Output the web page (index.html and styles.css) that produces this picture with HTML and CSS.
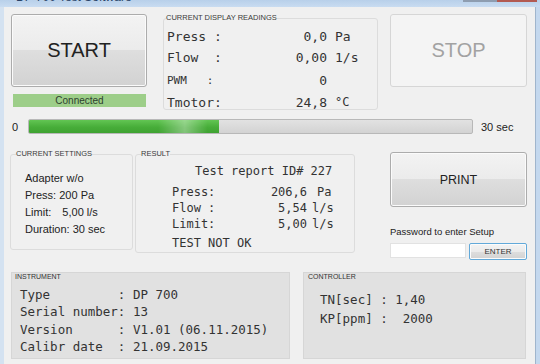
FILE: index.html
```html
<!DOCTYPE html>
<html lang="en">
<head>
    <meta charset="UTF-8">
    <meta name="viewport" content="width=device-width, initial-scale=1.0">
    <title>DP 700 Test Software</title>
    <link rel="stylesheet" href="styles.css">
</head>
<body>
    <div class="window">
        <div class="titlebar">
            <span class="title">DP 700 Test Software</span>
            <span class="caption-buttons">
                <span class="cap-min"></span>
                <span class="cap-close"></span>
            </span>
        </div>
        <div class="frame">
            <div class="frame-left"></div>
            <div class="client">
                <div class="top-row">
                    <div class="start-col">
                        <button class="btn btn-start">START</button>
                        <div class="status">Connected</div>
                    </div>
                    <fieldset class="group readings">
                        <legend>CURRENT DISPLAY READINGS</legend>
                        <div class="readings-grid">
                            <span class="lbl">Press :</span><span class="val">0,0</span><span>Pa</span>
                            <span class="lbl">Flow  :</span><span class="val">0,00</span><span>1/s</span>
                            <span class="lbl pwm">PWM   :</span><span class="val">0</span><span></span>
                            <span class="lbl">Tmotor:</span><span class="val">24,8</span><span class="deg">°C</span>
                        </div>
                    </fieldset>
                    <button class="btn btn-stop" disabled>STOP</button>
                </div>

                <div class="progress-row">
                    <span class="bar-min">0</span>
                    <div class="bar">
                        <div class="bar-fill" style="width: 43%;"></div>
                    </div>
                    <span class="bar-max">30 sec</span>
                </div>

                <div class="mid-row">
                    <fieldset class="group settings">
                        <legend>CURRENT SETTINGS</legend>
                        <div class="settings-list">
                            <div>Adapter w/o</div>
                            <div>Press: 200 Pa</div>
                            <div>Limit: <span class="limit-val">5,00 l/s</span></div>
                            <div>Duration: 30 sec</div>
                        </div>
                    </fieldset>
                    <fieldset class="group result">
                        <legend>RESULT</legend>
                        <div class="result-body">
                            <div class="result-title">Test report ID# 227</div>
                            <div class="result-grid">
                                <span class="lbl">Press:</span><span class="val">206,6</span><span class="unit-pa">Pa</span>
                                <span class="lbl">Flow :</span><span class="val">5,54</span><span>l/s</span>
                                <span class="lbl">Limit:</span><span class="val">5,00</span><span>l/s</span>
                            </div>
                            <div class="result-verdict">TEST NOT OK</div>
                        </div>
                    </fieldset>
                    <div class="setup-col">
                        <button class="btn btn-print">PRINT</button>
                        <div class="setup-label">Password to enter Setup</div>
                        <div class="setup-form">
                            <input type="password" class="setup-input">
                            <button class="btn btn-enter">ENTER</button>
                        </div>
                    </div>
                </div>

                <div class="bottom-row">
                    <div class="panel instrument">
                        <div class="panel-title">INSTRUMENT</div>
                        <div class="panel-lines">Type         : DP 700
Serial number: 13
Version      : V1.01 (06.11.2015)
Calibr date  : 21.09.2015</div>
                    </div>
                    <div class="panel controller">
                        <div class="panel-title">CONTROLLER</div>
                        <div class="panel-lines">TN[sec] : 1,40
KP[ppm] :  2000</div>
                    </div>
                </div>
            </div>
            <div class="frame-right"></div>
        </div>
    </div>
</body>
</html>
```

FILE: styles.css
```css
* {
    box-sizing: border-box;
}

body {
    margin: 0;
    width: 540px;
    height: 364px;
    overflow: hidden;
    background: #c4d8ee;
    font-family: "Liberation Sans", Arial, sans-serif;
    color: #222;
}

.window {
    display: flex;
    flex-direction: column;
    height: 364px;
}

/* window chrome */
.titlebar {
    height: 7px;
    flex: none;
    display: flex;
    overflow: hidden;
    background: linear-gradient(#b8d0ea, #c9dcf1);
}

.title {
    font-size: 12px;
    line-height: 12px;
    margin: -9px 0 0 16px;
    color: #2a4468;
}

.caption-buttons {
    display: flex;
    height: 2px;
    margin-left: auto;
    margin-right: 3px;
}

.cap-min { width: 34px; background: #8e9db0; }
.cap-close { width: 40px; background: #b25a52; }

.frame {
    flex: 1;
    display: flex;
}

.frame-left {
    width: 4px;
    background: #d4e2f1;
}

.frame-right {
    width: 5px;
    background: #c4d8ee;
    border-left: 1px solid #a0b5cc;
}

.client {
    flex: 1;
    background: #f0f0f0;
    padding: 5px 0 0 6px;
}

/* buttons */
.btn {
    display: block;
    padding: 0;
    font-family: "Liberation Sans", Arial, sans-serif;
    color: #222;
    border: 1px solid #acacac;
    border-radius: 3px;
    background: linear-gradient(#f3f3f3 0%, #ebebeb 50%, #dedede 50%, #d2d2d2 100%);
    box-shadow: inset 0 0 0 1px #fbfbfb;
}

.btn-start {
    width: 136px;
    height: 73px;
    font-size: 20px;
}

.btn-stop {
    width: 137px;
    height: 73px;
    margin: 2px 0 0 12px;
    font-size: 20px;
    color: #a2a2a2;
    background: #f4f4f4;
    border-color: #d6d6d6;
    box-shadow: none;
}

.btn-print {
    width: 137px;
    height: 55px;
    margin-top: 2px;
    font-size: 12.5px;
}

.btn-enter {
    width: 58px;
    height: 17px;
    margin-left: 3px;
    font-size: 8px;
    color: #333;
    border-color: #62a9d9;
    border-radius: 2px;
}

/* group boxes */
.group {
    margin: 0;
    padding: 0;
    min-width: 0;
    border: 1px solid #dcdcdc;
    border-radius: 3px;
}

.group legend {
    padding: 0;
    font-size: 7.5px;
    line-height: 8px;
    color: #3a3a3a;
}

.lbl {
    white-space: pre;
}

/* top row */
.top-row {
    display: flex;
    align-items: flex-start;
    height: 98px;
}

.start-col {
    width: 136px;
    margin: 2px 0 0 1px;
}

.status {
    height: 13px;
    margin: 7px 1px 0 2px;
    background: #9dce89;
    font-size: 10px;
    line-height: 13px;
    text-align: center;
    color: #2f3f2f;
}

.readings {
    width: 215px;
    height: 96px;
    margin: 2px 0 0 16px;
}

.readings legend {
    margin-left: 2px;
}

.readings-grid {
    display: grid;
    grid-template-columns: 80px 72px auto;
    grid-template-rows: 21px 21px 24px 20px;
    column-gap: 8px;
    align-items: center;
    margin: 4px 0 0 3px;
    font-family: "DejaVu Sans Mono", monospace;
    font-size: 13px;
    color: #333;
}

.val {
    text-align: right;
}

.pwm {
    font-size: 11px;
}

.deg {
    font-size: 12px;
}

/* progress */
.progress-row {
    display: flex;
    align-items: center;
    height: 15px;
    margin-top: 9px;
    font-size: 11px;
}

.bar-min {
    width: 18px;
    padding-left: 2px;
}

.bar {
    width: 445px;
    height: 15px;
    border: 1px solid #b8b8b8;
    border-radius: 2px;
    background: linear-gradient(#e2e2e2, #d3d3d3);
    overflow: hidden;
}

.bar-fill {
    height: 100%;
    background:
        linear-gradient(90deg, transparent 68%, rgba(255, 255, 255, 0.35) 82%, transparent 94%),
        linear-gradient(#62c553, #47ad39 55%, #3fa332);
}

.bar-max {
    margin-left: 8px;
}

/* middle row */
.mid-row {
    display: flex;
    align-items: flex-start;
    height: 122px;
    margin-top: 16px;
}

.settings {
    width: 123px;
    height: 100px;
}

.settings legend,
.result legend {
    margin-left: 5px;
}

.settings-list {
    margin: 12px 0 0 14px;
    font-size: 11px;
    line-height: 17px;
}

.limit-val {
    margin-left: 8px;
}

.result {
    width: 220px;
    height: 103px;
    margin-left: 2px;
}

.result-body {
    font-family: "DejaVu Sans Mono", monospace;
    font-size: 12px;
    color: #333;
}

.result-title {
    margin: 5px 0 0 59px;
    line-height: 16px;
}

.result-grid {
    display: grid;
    grid-template-columns: 72px 58px auto;
    grid-template-rows: 17px 16px 16px;
    column-gap: 5px;
    align-items: center;
    margin: 4px 0 0 36px;
}

.unit-pa {
    padding-left: 5px;
}

.result-verdict {
    margin: 3px 0 0 36px;
    line-height: 16px;
}

.setup-col {
    width: 137px;
    margin-left: 35px;
}

.setup-label {
    margin-top: 20px;
    font-size: 9.5px;
    line-height: 10px;
}

.setup-form {
    display: flex;
    align-items: flex-start;
    margin-top: 6px;
}

.setup-input {
    width: 76px;
    height: 15px;
    padding: 0;
    border: 1px solid #e2e2e2;
    background: #fff;
}

/* bottom row */
.bottom-row {
    display: flex;
    align-items: flex-start;
}

.panel {
    height: 87px;
    background: #e1e1e1;
    border: 1px solid #d6d6d6;
}

.instrument {
    width: 279px;
    margin-left: 1px;
}

.controller {
    width: 223px;
    margin-left: 13px;
}

.panel-title {
    margin-left: 3px;
    font-size: 7px;
    line-height: 7px;
    color: #333;
}

.controller .panel-title {
    margin-left: 4px;
}

.panel-lines {
    font-family: "DejaVu Sans Mono", monospace;
    font-size: 12.5px;
    white-space: pre;
    color: #333;
}

.instrument .panel-lines {
    margin: 6px 0 0 8px;
    line-height: 17.3px;
}

.controller .panel-lines {
    margin: 10px 0 0 16px;
    line-height: 19px;
}
```
